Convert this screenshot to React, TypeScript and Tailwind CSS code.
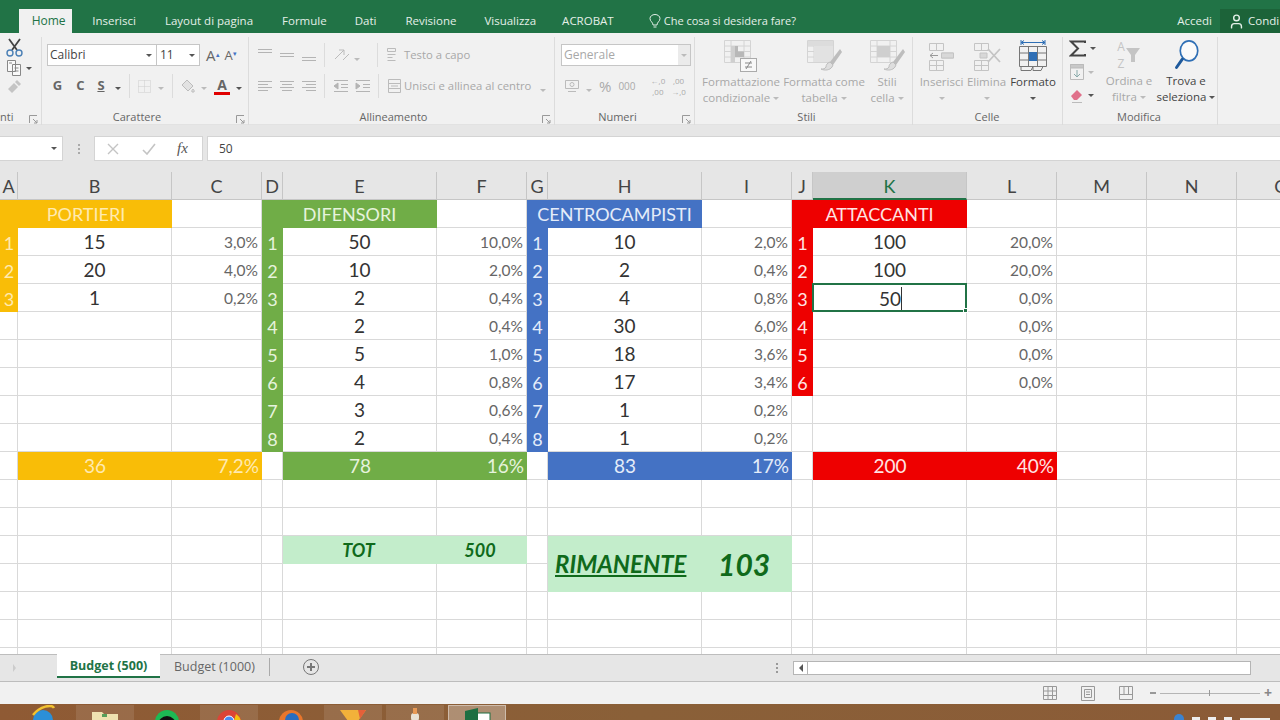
import { User } from 'lucide-react';
import type { ReactNode } from 'react';

const UI = "font-['Open_Sans',sans-serif]";

const num = 'text-[19px] text-[#333] justify-center pt-[2px]';
const pct = 'text-[15.5px] text-[#666] justify-end pr-[3px] pt-[3px]';

const teams = [
  { bg: 'bg-[#f9bd07] text-[#ffeab0]', name: 'PORTIERI', vals: ['15', '20', '1'], pcts: ['3,0%', '4,0%', '0,2%'], sum: ['36', '7,2%'] },
  { bg: 'bg-[#70ad47] text-[#e6f3dd]', name: 'DIFENSORI', vals: ['50', '10', '2', '2', '5', '4', '3', '2'], pcts: ['10,0%', '2,0%', '0,4%', '0,4%', '1,0%', '0,8%', '0,6%', '0,4%'], sum: ['78', '16%'] },
  { bg: 'bg-[#4472c4] text-[#e4ecf9]', name: 'CENTROCAMPISTI', vals: ['10', '2', '4', '30', '18', '17', '1', '1'], pcts: ['2,0%', '0,4%', '0,8%', '6,0%', '3,6%', '3,4%', '0,2%', '0,2%'], sum: ['83', '17%'] },
  { bg: 'bg-[#ee0000] text-[#ffe4e4]', name: 'ATTACCANTI', vals: ['100', '100', '50', '', '', ''], pcts: ['20,0%', '20,0%', '0,0%', '0,0%', '0,0%', '0,0%'], sum: ['200', '40%'] },
];

const columns = ['A', 'B', 'C', 'D', 'E', 'F', 'G', 'H', 'I', 'J', 'K', 'L', 'M', 'N', 'O'];

function Lines({ rows }: { rows: string[] }) {
  return (
    <svg width="16" height="14" viewBox="0 0 16 14" stroke="#b4b4b4" strokeWidth="1" fill="#b4b4b4">
      {rows.map((d, i) => <path key={i} d={d} />)}
    </svg>
  );
}

function Caret({ dark }: { dark?: boolean }) {
  return <span className={`inline-block w-0 h-0 border-x-[3px] border-x-transparent border-t-[3px] ${dark ? 'border-t-[#555]' : 'border-t-[#bbb]'}`} />;
}

function Launcher() {
  return (
    <svg width="9" height="9" viewBox="0 0 9 9" fill="none" stroke="#999">
      <path d="M.5 8V.5H8M4 4l4 4M8 5v3H5" />
    </svg>
  );
}

function Sep() {
  return <span className="w-px h-[24px] bg-[#dcdcdc]" />;
}

function Group({ w, label, launcher, labelClass, children }: { w: string; label: string; launcher?: boolean; labelClass?: string; children: ReactNode }) {
  return (
    <div className={`${w} shrink-0 h-[88px] border-r border-[#dcdcdc] flex flex-col relative`}>
      <div className="h-[72px]">{children}</div>
      <div className={`text-[11px] text-[#666] leading-[16px] text-center ${labelClass ?? ''}`}>{label}</div>
      {launcher && <span className="absolute right-[3px] bottom-[1px]"><Launcher /></span>}
    </div>
  );
}

function BigButton({ w, icon, lines, dark }: { w: string; icon: ReactNode; lines: ReactNode[]; dark?: boolean }) {
  return (
    <div className={`${w} flex flex-col items-center text-[11.5px] leading-[16px] ${dark ? 'text-[#444]' : 'text-[#a8a8a8]'}`}>
      <div className="h-[36px] flex items-center justify-center">{icon}</div>
      {lines.map((l, i) => <div key={i} className="whitespace-nowrap flex items-center gap-[3px] h-[16px]">{l}</div>)}
    </div>
  );
}

function Brush() {
  return (
    <g>
      <path d="M37 10L27 23l3 3 9-13z" fill="#bdbdbd" stroke="none" />
      <path d="M27 23c-3 1-4 3-4 5-1 2-3 2-5 2 4 2 9 1 11-2l1-2z" fill="#dedede" stroke="#bdbdbd" />
    </g>
  );
}

function CellGrid({ children }: { children?: ReactNode }) {
  return (
    <svg width="42" height="34" viewBox="0 0 42 34" fill="none" stroke="#d4d4d4">
      <path d="M4.500 1.500h26v22h-26zM4.500 7h26M4.500 12.500h26M4.500 18h26M11 1.500v22M24 1.500v22" />
      {children}
    </svg>
  );
}

export default function App() {
  return (
    <div className={`w-[1280px] h-[720px] overflow-hidden flex flex-col bg-white ${UI}`}>
      {/* title tabs */}
      <div className="h-[33px] bg-[#217346] flex items-end text-[11.5px] text-[#e4efe8] shrink-0">
        <div className="ml-[19px] w-[56px] h-[24px] bg-[#f1f1f1] text-[#217346] text-[12px] flex items-center justify-center pl-[6px]">Home</div>
        <div className="h-[24px] flex items-center w-full whitespace-nowrap">
          <span className="ml-[20px]">Inserisci</span>
          <span className="ml-[29px]">Layout di pagina</span>
          <span className="ml-[29px]">Formule</span>
          <span className="ml-[28px]">Dati</span>
          <span className="ml-[29px]">Revisione</span>
          <span className="ml-[28px]">Visualizza</span>
          <span className="ml-[26px]">ACROBAT</span>
          <svg className="ml-[35px]" width="12" height="15" viewBox="0 0 12 15" fill="none" stroke="#e4efe8">
            <path d="M4 11c0-3-3-3.500-3-6.500a5 4 0 0 1 10 0C11 7.500 8 8 8 11zM4.500 13h3" />
          </svg>
          <span className="ml-[3px] text-[11px]">Che cosa si desidera fare?</span>
          <span className="ml-auto">Accedi</span>
          <div className="ml-[8px] w-[60px] h-[24px] bg-[#1c6339] flex items-center pl-[8px] gap-[3px] overflow-hidden">
            <User size={17} className="shrink-0" />
            <span>Condi</span>
          </div>
        </div>
      </div>

      {/* ribbon */}
      <div className="h-[92px] bg-[#f1f1f1] flex items-start pt-[4px] shrink-0 text-[#aaa] border-b border-[#e2e2e2]">
        <Group w="w-[42px]" label="nti" labelClass="text-left" launcher>
          <div className="flex flex-col pl-[6px] gap-[2px] pt-[1px]">
            <svg width="17" height="19" viewBox="0 0 17 19" fill="none">
              <path d="M3 1l8 11M14 1L6 12" stroke="#444" strokeWidth="1.800" />
              <circle cx="4" cy="15" r="3" stroke="#4a7fb5" strokeWidth="1.400" />
              <circle cx="13" cy="15" r="3" stroke="#4a7fb5" strokeWidth="1.400" />
            </svg>
            <div className="flex items-center gap-[4px]">
              <svg width="16" height="18" viewBox="0 0 16 18" fill="#fafafa" stroke="#888"><path d="M1.500 1.500h8v11h-8zM6.500 5.500h8v11h-8zM8.500 9h4M8.500 12h4M3 4h3" /></svg>
              <Caret dark />
            </div>
            <svg width="17" height="17" viewBox="0 0 17 17" fill="#c4c4c4"><path d="M2 10l6-6 4 4-6 6zM9 3l2-2 4 4-2 2z" /></svg>
          </div>
        </Group>

        <Group w="w-[207px]" label="Carattere" labelClass="pr-[16px]" launcher>
          <div className="flex items-center h-[22px] mt-[7px] pl-[5px]">
            <div className="w-[110px] h-[22px] bg-white border border-[#c6c6c6] flex items-center justify-between pl-[2px] pr-[4px] text-[12px] text-[#444]">Calibri <Caret dark /></div>
            <div className="w-[43px] h-[22px] bg-white border border-l-0 border-[#c6c6c6] flex items-center justify-between pl-[3px] pr-[4px] text-[12px] text-[#444]">11 <Caret dark /></div>
            <span className="ml-[6px] text-[15px] text-[#666] leading-none">A<sup className="text-[7px] text-[#4472c4]">▴</sup></span>
            <span className="ml-[5px] text-[13px] text-[#666] leading-none">A<sup className="text-[7px] text-[#4472c4]">▾</sup></span>
          </div>
          <div className="flex items-center h-[24px] mt-[8px] pl-[4px] text-[#666] text-[13px] font-bold">
            <span className="w-[23px] text-center">G</span>
            <span className="w-[23px] text-center">C</span>
            <span className="w-[18px] text-center underline">S</span>
            <span className="ml-[5px] mr-[8px]"><Caret dark /></span>
            <Sep />
            <svg className="ml-[7px]" width="15" height="15" viewBox="0 0 15 15" fill="none" stroke="#ccc" strokeDasharray="1 1"><path d="M1.500 1.500h12v12h-12zM7.500 1.500v12M1.500 7.500h12" /></svg>
            <span className="ml-[6px] mr-[8px]"><Caret /></span>
            <Sep />
            <svg className="ml-[7px]" width="16" height="16" viewBox="0 0 16 16" fill="#e2e2e2" stroke="#bcbcbc"><path d="M7 2l6 6-5 5-6-6zM13 11c1 1 1.500 2 1 3h-2c-.5-1 0-2 1-3z" /></svg>
            <span className="ml-[5px] mr-[7px]"><Caret /></span>
            <span className="flex flex-col items-center w-[16px] text-[14px] leading-[14px] text-[#666]">A<span className="w-[16px] h-[3px] bg-[#e00000]" /></span>
            <span className="ml-[6px]"><Caret dark /></span>
          </div>
        </Group>

        <Group w="w-[306px]" label="Allineamento" labelClass="pr-[16px]" launcher>
          <div className="flex items-center h-[22px] mt-[7px] pl-[8px]">
            <span className="w-[22px]"><Lines rows={['M1 1.500h14', 'M1 4.500h14']} /></span>
            <span className="w-[22px]"><Lines rows={['M1 5.500h14', 'M1 8.500h14']} /></span>
            <span className="w-[23px]"><Lines rows={['M1 9.500h14', 'M1 12.500h14']} /></span>
            <Sep />
            <svg className="ml-[8px]" width="18" height="16" viewBox="0 0 18 16" fill="none" stroke="#bbb"><path d="M2 12L11 3M6 3l5 0 0 5M10 13l6-6" /></svg>
            <span className="ml-[3px] mr-[17px]"><Caret /></span>
            <Sep />
            <svg className="ml-[8px]" width="15" height="16" viewBox="0 0 15 16" fill="none" stroke="#bbb"><path d="M1.500 1.500h8v3h-8zM1.500 7.500h8M1.500 10.500h5M1.500 13.500h8" /></svg>
            <span className="ml-[3px] text-[11.3px] text-[#a8a8a8] whitespace-nowrap">Testo a capo</span>
          </div>
          <div className="flex items-center h-[24px] mt-[8px] pl-[8px]">
            <span className="w-[22px]"><Lines rows={['M1 2.500h14', 'M1 5.500h10', 'M1 8.500h14', 'M1 11.500h10']} /></span>
            <span className="w-[22px]"><Lines rows={['M1 2.500h14', 'M3 5.500h10', 'M1 8.500h14', 'M3 11.500h10']} /></span>
            <span className="w-[23px]"><Lines rows={['M1 2.500h14', 'M5 5.500h10', 'M1 8.500h14', 'M5 11.500h10']} /></span>
            <Sep />
            <span className="ml-[8px] w-[22px]"><Lines rows={['M1 1.500h14', 'M8 5.500h7', 'M8 8.500h7', 'M1 12.500h14', 'M1 7l4-3v6z']} /></span>
            <span className="w-[23px]"><Lines rows={['M1 1.500h14', 'M8 5.500h7', 'M8 8.500h7', 'M1 12.500h14', 'M5 7L1 4v6z']} /></span>
            <Sep />
            <svg className="ml-[8px]" width="15" height="16" viewBox="0 0 15 16" fill="none" stroke="#bbb"><path d="M1.500 1.500h12v13h-12zM1.500 5.500h12M1.500 10.500h12M4 8h7" /></svg>
            <span className="ml-[2px] text-[11.3px] text-[#a8a8a8] whitespace-nowrap">Unisci e allinea al centro</span>
            <span className="ml-[9px]"><Caret /></span>
          </div>
        </Group>

        <Group w="w-[140px]" label="Numeri" labelClass="pr-[14px]" launcher>
          <div className="ml-[6px] mt-[7px] w-[130px] h-[22px] bg-white border border-[#c6c6c6] flex items-center justify-between text-[12px] text-[#a8a8a8] pl-[2px]">
            Generale
            <span className="w-[12px] h-full bg-[#ebebeb] flex items-center justify-center"><Caret /></span>
          </div>
          <div className="flex items-center h-[24px] mt-[8px] pl-[9px] text-[#aaa]">
            <svg width="16" height="15" viewBox="0 0 16 15" fill="none" stroke="#bbb"><path d="M1.500 1.500h13v8h-13zM4 12.500h8" /><circle cx="8" cy="5.500" r="2" /></svg>
            <span className="ml-[6px]"><Caret /></span>
            <span className="ml-[7px] text-[15px] leading-none">%</span>
            <span className="ml-[7px] text-[10px]">000</span>
            <span className="ml-[7px]"><Sep /></span>
            <span className="ml-[8px] text-[8px] leading-[11px] text-center">←,0<br />,00</span>
            <span className="ml-[6px] text-[8px] leading-[11px] text-center">,00<br />→,0</span>
          </div>
        </Group>

        <Group w="w-[218px]" label="Stili" labelClass="pl-[6px]">
          <div className="flex pl-[4px] pt-[1px]">
            <BigButton w="w-[84px]" icon={
              <CellGrid>
                <path d="M11 7h7v5.500H11zM11 12.500h13V18H11z" fill="#b8b8b8" stroke="none" />
                <path d="M11 7h4v16.500h-4z" fill="#cfcfcf" stroke="none" />
                <rect x="20.500" y="19.500" width="16" height="13" fill="#f8f8f8" stroke="#aaa" />
                <path d="M25 24h7M25 28h7M31 22l-5 8" stroke="#888" />
              </CellGrid>
            } lines={['Formattazione', <>condizionale <Caret /></>]} />
            <BigButton w="w-[82px]" icon={
              <CellGrid>
                <path d="M5 2h25v5H5z" fill="#dcdcdc" stroke="none" />
                <path d="M11 7h19v16H11z" fill="#e2e2e2" stroke="none" />
                <Brush />
              </CellGrid>
            } lines={['Formatta come', <>tabella <Caret /></>]} />
            <BigButton w="w-[44px]" icon={
              <CellGrid>
                <path d="M11 7h13v11H11z" fill="#cfcfcf" stroke="none" />
                <Brush />
              </CellGrid>
            } lines={['Stili', <>cella <Caret /></>]} />
          </div>
        </Group>

        <Group w="w-[150px]" label="Celle" labelClass="pr-[1px]">
          <div className="flex pl-[6px] pt-[1px]">
            <BigButton w="w-[45px]" icon={
              <svg width="30" height="32" viewBox="0 0 30 32" fill="none" stroke="#c4c4c4"><path d="M2.500 3.500h14v7h-14zM9.500 3.500v7M2.500 20.500h14v10h-14zM9.500 20.500v10M2.500 25.500h14M14.500 13h12v5h-12z" /><path d="M14.500 13h12v5h-12z" fill="#d8d8d8" /><path d="M3 15.500h8M6 13l-3 2.500L6 18" stroke="#999" /></svg>
            } lines={['Inserisci', <Caret />]} />
            <BigButton w="w-[45px]" icon={
              <svg width="30" height="32" viewBox="0 0 30 32" fill="none" stroke="#c4c4c4"><path d="M2.500 3.500h14v7h-14zM9.500 3.500v7M2.500 20.500h14v10h-14zM9.500 20.500v10M2.500 25.500h14" /><path d="M8 13h7v5H8z" fill="#d8d8d8" /><path d="M16 9l12 13M28 9L16 22" strokeWidth="1.800" /></svg>
            } lines={['Elimina', <Caret />]} />
            <BigButton w="w-[48px]" dark icon={
              <svg width="30" height="34" viewBox="0 0 30 34" fill="none" stroke="#777"><path d="M3 1v5M27 1v5M3 3.500h24M6 1.500L3 3.500l3 2M24 1.500l3 2-3 2" stroke="#2f6fb5" /><path d="M1.500 7.500h27v20h-27zM1.500 14h27M1.500 21h27M10.500 7.500v20M19.500 7.500v20" /><rect x="11" y="13" width="8" height="9" fill="#2f6fb5" stroke="none" /><path d="M3 27.500v4h10l2-4M15 27.500v4h8l2-4" /></svg>
            } lines={['Formato', <Caret dark />]} />
          </div>
        </Group>

        <Group w="w-[155px]" label="Modifica" labelClass="pr-[2px]">
          <div className="flex">
            <div className="w-[38px] flex flex-col pl-[6px] gap-[3px]">
              <div className="flex items-center gap-[4px] h-[22px]">
                <svg width="17" height="17" viewBox="0 0 17 17" fill="none" stroke="#444" strokeWidth="2"><path d="M16 3V1.500H2L9 8.500 2 15.500h14V14" /></svg>
                <Caret dark />
              </div>
              <div className="flex items-center gap-[3px] h-[20px]">
                <svg width="16" height="18" viewBox="0 0 16 18" fill="none" stroke="#bbb"><path d="M1.500 1.500h13v15h-13z" /><path d="M1.500 1.500h13V5h-13z" fill="#c8c8c8" /><path d="M8 7v7M5 11l3 3 3-3" stroke="#8aa" /></svg>
                <Caret />
              </div>
              <div className="flex items-center gap-[3px] h-[20px]">
                <svg width="16" height="16" viewBox="0 0 16 16" fill="#e0708a"><path d="M2 9l6-6 5 5-5 5H5z" /><path d="M3 15h10v1H3z" fill="#bbb" /></svg>
                <Caret dark />
              </div>
            </div>
            <BigButton w="w-[56px]" icon={<span className="flex items-center text-[12px] leading-[17px] text-[#c4c4c4]"><span className="text-center">A<br />Z</span><svg width="16" height="16" viewBox="0 0 16 16" fill="#c4c4c4"><path d="M1 1h14L10 8v7H6V8z" /></svg></span>} lines={['Ordina e', <>filtra <Caret /></>]} />
            <BigButton w="w-[58px]" dark icon={
              <svg width="27" height="30" viewBox="0 0 32 36" fill="none">
                <ellipse cx="19" cy="13" rx="10.500" ry="12" stroke="#2f6fb5" strokeWidth="2" fill="#fafafa" />
                <path d="M11 23L4 33" stroke="#1f5a9c" strokeWidth="3.500" strokeLinecap="round" />
              </svg>
            } lines={['Trova e', <>seleziona <Caret dark /></>]} />
          </div>
        </Group>
      </div>

      {/* formula bar */}
      <div className="h-[47px] bg-[#e6e6e6] flex items-start pt-[11px] shrink-0">
        <div className="w-[63px] h-[25px] bg-white border border-l-0 border-[#d4d4d4] flex items-center justify-end pr-[5px]"><Caret dark /></div>
        <div className="w-[31px] h-[25px] flex flex-col items-center justify-center gap-[2px]">
          <span className="w-[2px] h-[2px] bg-[#aaa]" /><span className="w-[2px] h-[2px] bg-[#aaa]" /><span className="w-[2px] h-[2px] bg-[#aaa]" />
        </div>
        <div className="w-[109px] h-[25px] bg-white border border-[#d4d4d4] flex items-center text-[#bbb]">
          <svg className="ml-[12px]" width="12" height="12" viewBox="0 0 12 12" fill="none" stroke="#c4c4c4" strokeWidth="1.400"><path d="M1 1l10 10M11 1L1 11" /></svg>
          <svg className="ml-[23px]" width="14" height="12" viewBox="0 0 14 12" fill="none" stroke="#c4c4c4" strokeWidth="1.600"><path d="M1 7l4 4 8-10" /></svg>
          <span className="ml-[21px] font-['Liberation_Serif',serif] italic text-[15px] text-[#555]">fx</span>
        </div>
        <div className="flex-1 ml-[4px] h-[25px] bg-white border border-r-0 border-[#d4d4d4] flex items-center pl-[11px] text-[12px] text-[#444]">50</div>
      </div>

      {/* sheet */}
      <div className="h-[482px] shrink-0 bg-[#e6e6e6] overflow-hidden font-['Lato',sans-serif]">
        <div className="grid grid-cols-[18px_154px_90px_21px_154px_90px_21px_154px_90px_21px_154px_90px_90px_90px_90px] auto-rows-[28px] w-[1327px] bg-white">
          {columns.map((c) => (
            <div key={c} className={`flex items-center justify-center pt-[2px] text-[18px] border-r border-b border-[#c6c6c6] ${c === 'K' ? 'bg-[#cfcfcf] text-[#217346] border-b-2 border-b-[#217346]' : 'bg-[#e6e6e6] text-[#444]'}`}>{c}</div>
          ))}

          {/* team headers */}
          {teams.flatMap((tm) => [
            <div key={tm.name} className={`col-span-2 flex items-center justify-center pt-[1px] text-[18px] ${tm.bg}`}>{tm.name}</div>,
            <Blank key={tm.name + 'x'} />,
          ])}
          <Blank /><Blank /><Blank />

          {/* players */}
          {[0, 1, 2, 3, 4, 5, 6, 7].flatMap((r) => [
            ...teams.flatMap((tm) => {
              const has = r < tm.vals.length;
              const editing = tm.name === 'ATTACCANTI' && r === 2;
              return [
                has
                  ? <div key={tm.name + r + 'n'} className={`flex items-center justify-center pt-[2px] text-[18px] ${tm.bg}`}>{r + 1}</div>
                  : <Blank key={tm.name + r + 'n'} />,
                editing
                  ? (
                    <div key={tm.name + r + 'v'} className="relative flex items-center justify-center pt-[1px] text-[19px] text-[#333] border-2 border-[#217346] -mt-px -ml-px">
                      <span className="border-r border-[#333] leading-[23px] pl-[2px]">50</span>
                      <span className="absolute -right-[3px] -bottom-[3px] w-[5px] h-[5px] bg-[#217346] border border-white" />
                    </div>
                  )
                  : <Text key={tm.name + r + 'v'} cls={num} t={has ? tm.vals[r] : ''} />,
                <Text key={tm.name + r + 'p'} cls={pct} t={has ? tm.pcts[r] : ''} />,
              ];
            }),
            <Blank key={r + 'm'} />,
            <Blank key={r + 'o'} />,
            <Blank key={r + 'q'} />,
          ])}

          {/* totals */}
          {teams.flatMap((tm) => [
            <Blank key={tm.name + 's'} />,
            <div key={tm.name + 't'} className={`flex items-center justify-center text-[19px] ${tm.bg}`}>{tm.sum[0]}</div>,
            <div key={tm.name + 'u'} className={`flex items-center justify-end pr-[3px] text-[19px] ${tm.bg}`}>{tm.sum[1]}</div>,
          ])}
          <Blank /><Blank /><Blank />

          <BlankRow />
          <BlankRow />

          {/* TOT and RIMANENTE */}
          <Blank /><Blank /><Blank /><Blank />
          <div className="bg-[#c3edcb] flex items-center justify-center pr-[3px] font-bold italic text-[18px] text-[#0f6a1b]">TOT</div>
          <div className="bg-[#c3edcb] flex items-center justify-center pr-[4px] font-bold italic text-[18px] text-[#0f6a1b]">500</div>
          <Blank />
          <div className="col-span-2 row-span-2 bg-[#c3edcb] flex items-center font-bold italic text-[#0f6a1b]">
            <span className="ml-[7px] w-[163px] text-[24px] underline whitespace-nowrap">RIMANENTE</span>
            <span className="text-[30px]">103</span>
          </div>
          <Blank /><Blank /><Blank /><Blank /><Blank /><Blank />

          <Blank /><Blank /><Blank /><Blank /><Blank /><Blank /><Blank />
          <Blank /><Blank /><Blank /><Blank /><Blank /><Blank />

          <BlankRow />
          <BlankRow />
          <BlankRow />
        </div>
      </div>

      {/* sheet tabs */}
      <div className="h-[28px] bg-[#e6e6e6] border-y border-[#bdbdbd] flex items-start shrink-0 relative">
        <span className="ml-[13px] mt-[9px] w-0 h-0 border-y-[4px] border-y-transparent border-l-[3px] border-l-[#ccc]" />
        <div className="ml-[41px] w-[103px] h-[24px] pt-[3px] bg-white border-b-2 border-[#217346] flex items-center justify-center text-[12.5px] font-bold text-[#217346] -mt-[1px] whitespace-nowrap">Budget (500)</div>
        <div className="ml-[14px] h-[25px] flex items-center text-[12.5px] text-[#666] whitespace-nowrap">Budget (1000)</div>
        <span className="ml-[14px] mt-[3px] w-px h-[18px] bg-[#aaa]" />
        <svg className="ml-[33px] mt-[4px]" width="16" height="16" viewBox="0 0 16 16" fill="none" stroke="#777"><circle cx="8" cy="8" r="7.500" /><path d="M8 4v8M4 8h8" strokeWidth="2" /></svg>
        <div className="ml-auto flex items-center mt-[6px]">
          <div className="flex flex-col gap-[2px] mr-[15px]">
            <span className="w-[2px] h-[2px] bg-[#999]" /><span className="w-[2px] h-[2px] bg-[#999]" /><span className="w-[2px] h-[2px] bg-[#999]" />
          </div>
          <div className="w-[15px] h-[14px] bg-white border border-[#b5b5b5] flex items-center justify-center">
            <span className="w-0 h-0 border-y-[4px] border-y-transparent border-r-[4px] border-r-[#555]" />
          </div>
          <div className="w-[443px] h-[14px] bg-white border border-l-0 border-[#b5b5b5]" />
          <div className="w-[29px]" />
        </div>
      </div>

      {/* status bar */}
      <div className="h-[22px] bg-[#f1f1f1] flex items-center justify-end shrink-0 pr-[8px]">
        <svg width="14" height="14" viewBox="0 0 14 14" fill="none" stroke="#999"><path d="M.5.500h13v13H.5zM.5 5h13M.5 9.500h13M5 .5v13M9.500 .5v13" /></svg>
        <svg className="ml-[24px]" width="14" height="15" viewBox="0 0 14 15" fill="none" stroke="#999"><path d="M.5.500h13v14H.5zM3.500 3.500h7v8h-7zM5 6h4M5 8.500h4" /></svg>
        <svg className="ml-[24px]" width="14" height="14" viewBox="0 0 14 14" fill="none" stroke="#999"><path d="M.5.500h13v13H.5zM.5 8.500h13M5 .5v8M9.500 .5v8" /></svg>
        <span className="ml-[17px] w-[6px] h-[2px] bg-[#999]" />
        <div className="ml-[4px] w-[100px] h-px bg-[#b5b5b5] flex justify-center items-center"><span className="w-px h-[6px] bg-[#999]" /></div>
        <span className="ml-[4px] text-[14px] leading-none text-[#888] font-bold">+</span>
      </div>

      {/* taskbar */}
      <div className="h-[16px] shrink-0 bg-gradient-to-r from-[#8f5a34] via-[#8a6038] to-[#8b5b37] flex overflow-hidden pl-[12px] relative">
        {[
          <svg width="26" height="16" viewBox="0 0 26 16"><circle cx="13" cy="15" r="10" fill="#2b8fd8" /><path d="M3 10C10 1 22-1 24 3" fill="none" stroke="#f2c230" strokeWidth="2.500" /></svg>,
          <svg width="30" height="16" viewBox="0 0 30 16"><path d="M2 7h10l2 2h14v7H2z" fill="#efe2b0" /><rect x="12" y="9" width="5" height="3" fill="#58a05a" /></svg>,
          <svg width="30" height="16" viewBox="0 0 30 16"><circle cx="15" cy="17" r="12" fill="#1db954" /><circle cx="15" cy="20" r="9" fill="#111" /></svg>,
          <svg width="30" height="16" viewBox="0 0 30 16"><circle cx="15" cy="17" r="12" fill="#dc4437" /><circle cx="15" cy="16" r="5" fill="#4a8af4" stroke="#fff" /><path d="M22 9a12 12 0 0 1 5 7h-7z" fill="#f4c20d" /></svg>,
          <svg width="30" height="16" viewBox="0 0 30 16"><circle cx="15" cy="17" r="12" fill="#e8762c" /><circle cx="16" cy="15" r="7" fill="#2a6dbf" /></svg>,
          <svg width="30" height="16" viewBox="0 0 30 16"><path d="M2 5h26l-8 11H10z" fill="#f2b13a" /><path d="M20 5h8l-6 9z" fill="#e5603a" /></svg>,
          <svg width="30" height="16" viewBox="0 0 30 16"><rect x="11" y="8" width="8" height="8" rx="3" fill="#e9e2d5" /><rect x="13" y="3" width="4" height="6" fill="#e89a56" /></svg>,
          <svg width="30" height="16" viewBox="0 0 30 16"><rect x="14" y="7" width="14" height="9" fill="#fff" stroke="#1d6f42" /><path d="M3 5l13-3v14H3z" fill="#1d6f42" /></svg>,
        ].map((icon, i) => (
          <div key={i} className={`shrink-0 flex justify-center mt-[1px] ${i === 7 ? 'bg-white/30 border-t border-x border-white/40 w-[58px] mx-[2px]' : i === 1 || i === 3 || i === 5 || i === 6 ? 'bg-white/10 w-[58px] mx-[2px]' : 'w-[62px]'}`}>{icon}</div>
        ))}
        <div className="ml-auto flex items-end gap-[8px] pr-[10px] mt-[11px]">
          <span className="w-[10px] h-[6px] rounded-t-full bg-[#3b83d0]" />
          <span className="w-[8px] h-[3px] bg-[#eee]" />
          <span className="w-[8px] h-[3px] bg-[#eee]" />
          <span className="w-[8px] h-[3px] bg-[#eee]" />
          <span className="w-[30px] h-[2px] bg-[#eee]" />
        </div>
      </div>
    </div>
  );
}

function Blank() {
  return <div className="border-r border-b border-[#d9d9d9]" />;
}

function BlankRow() {
  return <>{columns.map((c) => <Blank key={c} />)}</>;
}

function Text({ t, cls }: { t?: ReactNode; cls: string }) {
  return <div className={`flex items-center border-r border-b border-[#d9d9d9] ${cls}`}>{t}</div>;
}
